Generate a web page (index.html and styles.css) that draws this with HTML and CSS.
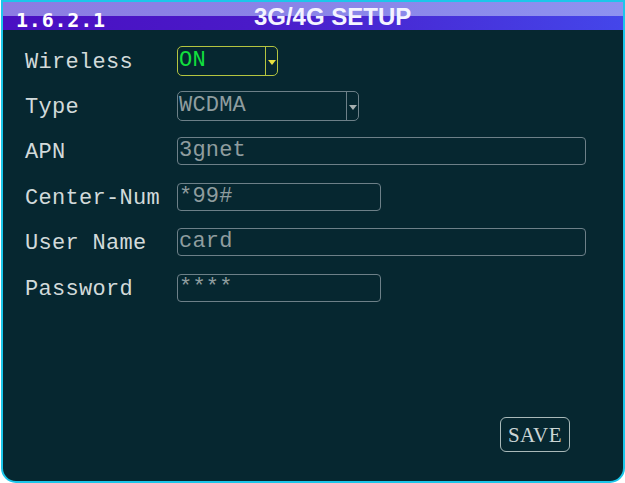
FILE: index.html
```html
<!DOCTYPE html>
<html>
<head>
<meta charset="utf-8">
<link rel="stylesheet" href="styles.css">
</head>
<body>
<div class="screen">
  <div class="header">
    <span class="menu-num">1.6.2.1</span>
    <span class="title">3G/4G SETUP</span>
  </div>
  <div class="content">
    <div class="form">
      <div class="label">Wireless</div>
      <div class="field">
        <div class="select select-active w-on">
          <span class="val val-on">ON</span>
          <span class="arrow"><span class="tri tri-active"></span></span>
        </div>
      </div>

      <div class="label">Type</div>
      <div class="field">
        <div class="select w-type">
          <span class="val">WCDMA</span>
          <span class="arrow"><span class="tri"></span></span>
        </div>
      </div>

      <div class="label">APN</div>
      <div class="field"><div class="input w-long"><span class="val">3gnet</span></div></div>

      <div class="label">Center-Num</div>
      <div class="field"><div class="input w-short"><span class="val">*99#</span></div></div>

      <div class="label">User Name</div>
      <div class="field"><div class="input w-long"><span class="val">card</span></div></div>

      <div class="label">Password</div>
      <div class="field"><div class="input w-short"><span class="val">****</span></div></div>
    </div>
    <div class="footer">
      <div class="btn">SAVE</div>
    </div>
  </div>
</div>
</body>
</html>
```

FILE: styles.css
```css
html, body {
  margin: 0;
  padding: 0;
  background: #ffffff;
}

.screen {
  box-sizing: border-box;
  width: 624px;
  height: 483px;
  margin-left: 1px;
  border: 2px solid #1cc6ea;
  border-radius: 0 0 15px 15px;
  background: #062730;
  overflow: hidden;
  display: flex;
  flex-direction: column;
}

.header {
  height: 28px;
  flex: none;
  display: flex;
  align-items: flex-start;
  background:
    linear-gradient(90deg, #4a0fc2 0%, #4a1ac8 40%, #4446ea 100%) left bottom / 100% 14px no-repeat,
    linear-gradient(90deg, #8c7ce2 0%, #8a84e8 50%, #8e92f0 100%) left top / 100% 14px no-repeat;
}

.menu-num {
  font-family: "DejaVu Sans Mono", monospace;
  font-weight: bold;
  font-size: 20px;
  line-height: 19px;
  color: #ffffff;
  margin-top: 9px;
  margin-left: 13px;
  letter-spacing: 0.8px;
}

.title {
  font-family: "Liberation Sans", Arial, sans-serif;
  font-weight: bold;
  font-size: 24px;
  line-height: 24px;
  color: #f4f4ff;
  margin-top: 3px;
  margin-left: 148px;
}

.content {
  flex: 1;
  display: flex;
  flex-direction: column;
  padding: 8px 0 0 22px;
}

.form {
  display: grid;
  grid-template-columns: 152px auto;
  grid-auto-rows: 45.4px;
  align-items: center;
}

.label {
  font-family: "Liberation Mono", monospace;
  font-size: 22px;
  line-height: 22px;
  letter-spacing: 0.3px;
  color: #d2dada;
  padding-top: 4px;
}

.field {
  display: flex;
  align-items: center;
}

.val {
  font-family: "Liberation Mono", monospace;
  font-size: 22px;
  line-height: 22px;
  letter-spacing: 0.2px;
  color: #8f9d9f;
  padding-left: 1px;
  white-space: pre;
}

.val-on {
  color: #12e03e;
}

.input {
  box-sizing: border-box;
  height: 28px;
  border: 1.5px solid #6d8088;
  border-radius: 4px;
  display: flex;
  align-items: center;
  overflow: hidden;
}

.w-long { width: 409px; }
.w-short { width: 204px; }

.select {
  box-sizing: border-box;
  height: 30px;
  border: 1.5px solid #6d8088;
  border-radius: 5px;
  display: flex;
  align-items: center;
  overflow: hidden;
}

.select .val {
  flex: 1;
}

.select-active {
  border-color: #b4c440;
}

.w-on { width: 101px; }
.w-type { width: 182px; }

.arrow {
  align-self: stretch;
  width: 12px;
  border-left: 1.5px solid #6d8088;
  display: flex;
  align-items: center;
  justify-content: center;
  padding-top: 3px;
  box-sizing: border-box;
}

.select-active .arrow {
  border-left-color: #b4c440;
}

.tri {
  width: 0;
  height: 0;
  border-left: 4px solid transparent;
  border-right: 4px solid transparent;
  border-top: 5px solid #a6b0b0;
}

.tri-active {
  border-top-color: #e8e040;
}

.footer {
  flex: 1;
  display: flex;
  justify-content: flex-end;
  align-items: flex-end;
  padding: 0 53px 29px 0;
}

.btn {
  box-sizing: border-box;
  width: 70px;
  height: 35px;
  border: 1.5px solid #a9b9b9;
  border-radius: 6px;
  display: flex;
  align-items: center;
  justify-content: center;
  font-family: "Liberation Serif", serif;
  font-size: 21px;
  line-height: 21px;
  letter-spacing: 0.5px;
  color: #cbd5d5;
  padding-top: 2px;
}
```
